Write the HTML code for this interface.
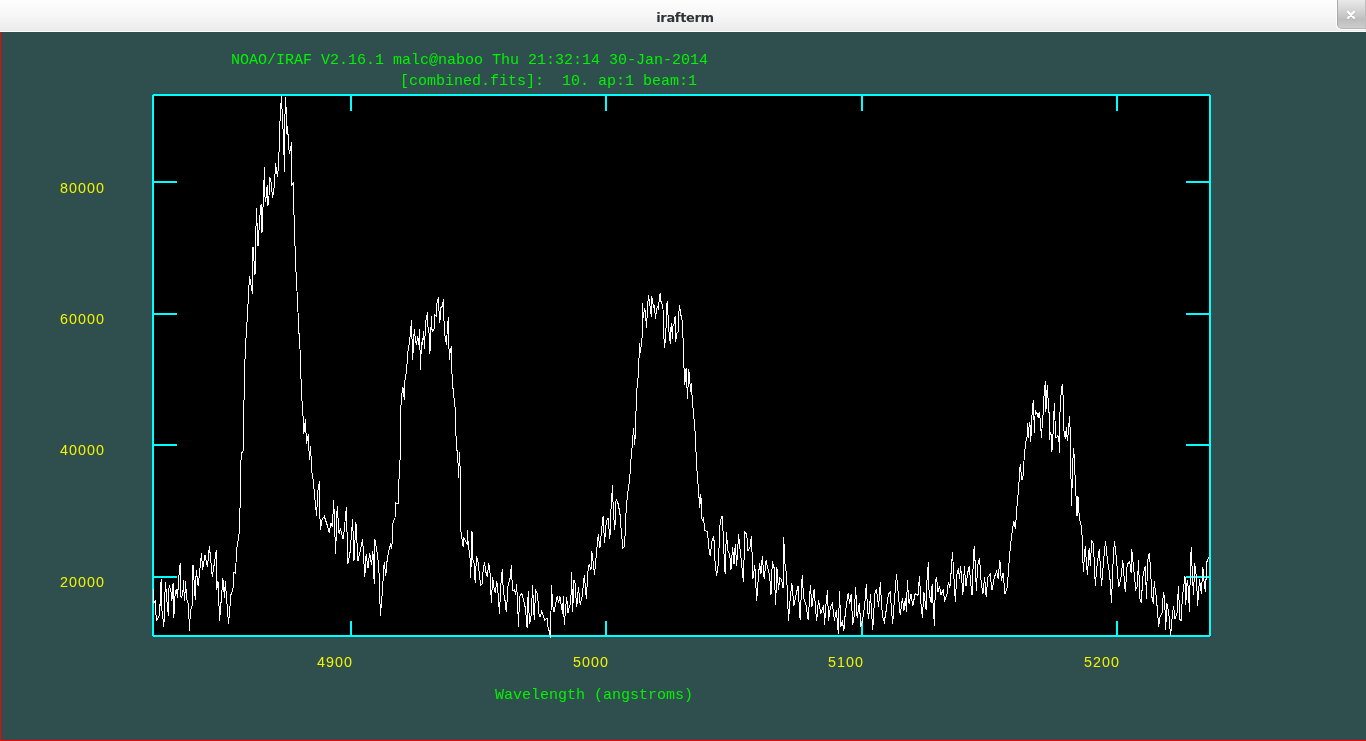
<!DOCTYPE html>
<html><head><meta charset="utf-8"><title>irafterm</title>
<style>
html,body{margin:0;padding:0;}
body{width:1366px;height:741px;overflow:hidden;background:#2f4f4f;position:relative;font-family:"Liberation Mono","DejaVu Sans Mono",monospace;}
#tb{position:absolute;left:0;top:0;width:1366px;height:31px;background:linear-gradient(#fefefe 0%,#f6f6f6 50%,#ebebeb 100%);border-bottom:1px solid #fbfbfb;}
#title{position:absolute;left:2px;top:1px;width:1366px;height:31px;line-height:33px;text-align:center;font-family:"DejaVu Sans","Liberation Sans",sans-serif;font-weight:bold;font-size:13px;letter-spacing:-0.35px;color:#2e3436;will-change:transform;}
#close{position:absolute;left:1337px;top:0;width:29px;height:29px;background:linear-gradient(#e9e9e9 0%,#cfcfcf 45%,#bdbdbd 70%,#cdcdcd 100%);border-left:1px solid #a9a9a9;border-bottom:1px solid #b5b5b5;border-bottom-left-radius:5px;box-sizing:border-box;box-shadow:-1px 1px 0 rgba(255,255,255,0.85), inset -1px 0 0 #bdbdbd;}
#close svg{position:absolute;left:8px;top:10.4px;}
#redl{position:absolute;left:0;top:32px;width:1px;height:709px;background:#ff0000;}
#redb{position:absolute;left:0;top:740px;width:1366px;height:1px;background:#ff0000;}
#plot{position:absolute;left:0;top:0;}
.t{position:absolute;font-size:15px;line-height:15px;height:15px;white-space:pre;letter-spacing:0;will-change:transform;}
.g{color:#00f400;}
.y{color:#f4f400;font-family:"Liberation Sans",sans-serif;font-size:14.3px;letter-spacing:1.047px;}
</style></head><body>
<div id="tb"></div><div id="title">irafterm</div>
<div id="close"><svg width="10" height="11" viewBox="0 0 10 11"><path d="M2 2.8 L8 8.8 M8 2.8 L2 8.8" stroke="#a8a8a8" stroke-width="2.3" stroke-linecap="round" fill="none"/><path d="M2 2 L8 8 M8 2 L2 8" stroke="#ffffff" stroke-width="2.3" stroke-linecap="round" fill="none"/></svg></div>
<div id="redl"></div><div id="redb"></div>
<svg id="plot" width="1366" height="741" viewBox="0 0 1366 741" shape-rendering="crispEdges">
<rect x="152" y="94" width="1059" height="543" fill="#00ffff"/>
<rect x="154" y="96" width="1055" height="539" fill="#000000"/>
<rect x="152" y="94" width="1" height="1" fill="#2f4f4f"/><rect x="1210" y="94" width="1" height="1" fill="#2f4f4f"/><rect x="1210" y="636" width="1" height="1" fill="#1a2c2c"/><rect x="152" y="636" width="1" height="1" fill="#2a4646"/>
<g fill="#00ffff"><rect x="350" y="96" width="2" height="15"/><rect x="350" y="621" width="2" height="15"/><rect x="605" y="96" width="2" height="15"/><rect x="605" y="621" width="2" height="15"/><rect x="861" y="96" width="2" height="15"/><rect x="861" y="621" width="2" height="15"/><rect x="1116" y="96" width="2" height="15"/><rect x="1116" y="621" width="2" height="15"/><rect x="154" y="181" width="23" height="2"/><rect x="1186" y="181" width="23" height="2"/><rect x="154" y="313" width="23" height="2"/><rect x="1186" y="313" width="23" height="2"/><rect x="154" y="444" width="23" height="2"/><rect x="1186" y="444" width="23" height="2"/><rect x="154" y="576" width="23" height="2"/><rect x="1186" y="576" width="23" height="2"/></g>
<polyline fill="none" stroke="#ffffff" stroke-width="1" stroke-linejoin="miter" points="153.6,589.4 154.0,603.0 155.2,601.2 155.7,610.6 156.4,620.6 158.0,618.2 159.0,616.3 159.5,604.5 160.4,605.0 160.6,586.5 161.3,579.3 161.8,610.6 162.8,614.4 163.4,626.7 164.2,621.0 164.7,602.1 165.3,582.3 165.9,588.0 166.5,595.5 167.5,607.8 168.4,615.8 168.9,588.9 169.4,585.1 170.3,588.9 171.3,593.6 171.9,601.2 172.7,585.1 173.3,583.2 173.6,617.7 174.4,610.6 174.8,598.4 175.5,591.3 176.5,589.8 177.4,597.9 177.7,589.8 178.4,588.9 178.6,579.0 179.5,570.0 180.2,563.0 180.4,595.5 181.4,597.0 182.3,595.5 182.9,591.7 183.6,580.0 184.0,591.7 184.5,600.7 185.2,589.8 185.7,580.9 186.4,598.8 187.3,600.7 188.3,604.0 188.9,616.3 189.5,631.0 190.2,615.4 190.8,610.2 192.1,605.4 192.5,588.9 193.0,565.3 193.7,573.8 194.6,590.8 195.4,599.8 195.8,579.5 196.4,570.0 197.3,579.5 198.2,586.1 201.5,553.0 202.6,570.0 205.0,554.8 207.5,567.0 209.4,546.0 212.3,576.7 216.4,550.0 216.7,589.6 218.0,581.5 219.6,620.7 222.9,578.3 224.5,597.7 225.3,581.5 228.5,623.6 231.0,594.5 232.9,589.6 233.9,572.6 235.5,573.4 236.6,550.0 238.3,539.4 239.8,527.8 240.4,472.9 241.3,453.6 243.4,450.6 243.7,416.5 244.6,369.0 245.8,340.8 246.6,330.0 248.0,304.0 249.5,276.5 252.5,294.0 253.0,247.0 255.0,275.0 256.4,208.4 258.0,246.0 260.4,208.7 261.2,203.9 262.0,233.0 263.2,202.3 264.5,167.4 264.8,195.8 265.8,202.3 266.4,189.3 267.4,185.2 268.0,205.5 269.0,195.8 269.6,177.1 270.9,180.4 271.8,189.3 272.6,198.2 273.9,189.3 274.7,181.2 275.5,163.3 276.6,171.5 277.4,177.1 278.6,165.8 279.4,139.0 280.3,113.0 281.5,95.6 282.3,116.3 283.1,131.0 283.9,150.4 284.4,171.5 285.2,96.9 286.3,110.6 286.8,134.2 287.5,126.0 288.1,135.8 288.8,148.8 289.6,153.6 290.7,147.9 291.7,142.3 292.0,184.4 293.3,182.8 293.6,203.9 294.3,222.0 295.0,245.7 296.0,271.7 297.5,301.0 298.8,330.0 300.0,349.4 301.0,378.6 302.1,403.0 303.3,420.7 303.8,433.6 305.4,419.0 306.5,444.0 308.3,434.5 309.4,459.7 310.8,446.0 311.3,469.0 313.0,478.6 314.8,497.5 316.7,516.4 317.5,493.4 319.4,481.3 320.2,530.4 322.1,519.0 324.3,516.4 327.0,524.5 329.1,532.6 331.0,523.0 332.4,527.0 333.7,500.0 335.6,554.0 337.2,505.6 339.1,534.0 340.5,528.5 343.2,539.3 344.5,527.0 346.4,507.0 347.8,564.4 349.9,554.0 352.6,519.0 354.0,561.0 355.9,521.8 358.0,561.0 360.7,548.8 362.6,539.3 364.8,577.0 366.1,554.0 368.0,567.7 369.6,552.8 371.5,565.0 372.9,551.5 374.2,583.8 374.8,539.3 376.9,551.5 378.8,566.3 380.4,615.7 382.3,592.0 384.2,562.3 385.8,575.7 386.9,562.3 388.3,552.8 390.4,544.7 391.8,548.8 393.1,521.8 395.0,517.7 395.8,502.9 398.0,504.2 399.3,471.8 400.2,457.0 400.6,430.0 400.8,408.5 401.7,394.8 402.9,387.5 404.5,400.4 404.6,382.6 406.6,370.5 407.7,353.5 409.8,339.7 411.5,320.0 412.6,360.0 414.3,329.0 415.2,338.0 416.3,345.4 417.9,336.0 418.5,345.0 419.6,329.0 420.4,369.7 421.5,342.0 422.4,345.0 423.6,331.0 424.4,349.0 425.6,322.9 427.4,312.4 428.0,327.0 429.7,336.7 429.9,353.5 431.5,316.0 432.1,331.8 434.4,328.6 434.5,314.4 436.6,316.4 436.8,304.3 438.4,297.2 438.6,303.5 439.6,322.5 440.6,315.6 441.0,307.5 442.6,305.9 443.4,299.2 443.8,316.4 444.7,334.3 446.5,345.4 447.5,324.1 448.5,317.2 449.2,360.0 450.3,350.0 451.5,346.2 451.6,367.2 452.8,386.7 455.2,408.5 456.0,436.0 456.8,450.0 457.6,452.0 458.6,477.8 459.4,452.0 460.3,472.4 460.8,530.5 463.1,546.7 463.9,537.8 465.5,541.0 467.1,543.5 467.5,530.0 468.3,546.7 469.9,554.8 470.7,578.3 472.0,531.3 472.5,558.9 474.1,563.7 475.2,583.2 476.5,556.4 478.0,562.1 479.3,573.4 480.6,585.6 482.0,584.0 483.3,568.6 484.6,562.4 485.8,571.8 487.4,576.7 488.7,563.4 489.8,568.6 490.6,584.8 491.4,603.4 492.6,576.7 493.9,588.0 495.2,592.9 496.8,581.5 497.9,591.3 499.5,613.6 500.8,584.8 502.3,569.1 503.3,591.3 504.9,599.4 506.3,612.3 507.1,601.0 508.1,584.8 510.1,578.3 511.4,565.3 512.0,579.9 513.0,591.3 514.6,589.6 515.7,595.3 516.5,584.5 517.3,596.1 518.5,626.9 519.5,597.7 521.1,593.7 522.2,594.5 523.8,601.0 525.4,608.3 527.1,627.7 528.2,591.3 529.2,617.2 529.8,623.6 531.1,615.5 532.7,585.3 533.5,608.3 534.4,620.4 535.5,589.6 537.6,594.5 538.9,613.9 540.0,617.2 541.6,611.5 543.3,615.5 544.9,620.4 547.0,618.0 548.1,627.7 549.4,631.7 550.5,638.4 551.5,585.3 552.7,605.8 554.1,612.3 555.4,604.2 557.3,596.1 558.6,602.6 559.9,596.1 561.1,605.0 562.7,613.9 563.2,596.1 564.3,624.5 565.6,608.3 566.7,596.9 567.9,613.1 569.2,607.4 570.8,602.6 571.6,572.1 572.6,612.3 574.0,579.9 574.8,580.3 576.7,607.3 578.4,587.0 580.2,604.6 582.1,596.5 584.3,575.0 586.4,599.2 587.8,572.3 589.1,564.2 591.0,569.6 591.8,550.7 593.7,566.9 594.5,575.0 596.4,553.4 598.3,534.5 599.9,548.0 601.8,527.7 603.2,515.6 604.5,542.6 606.4,521.0 608.0,518.3 609.9,538.5 611.3,502.0 612.6,485.3 613.2,510.0 614.8,530.4 616.1,499.4 618.0,503.4 619.9,512.9 621.5,534.5 622.9,548.0 624.2,546.6 625.3,531.8 626.1,510.2 627.5,494.0 629.6,480.5 630.6,464.0 632.1,447.3 633.5,428.4 634.8,444.6 635.7,420.3 636.7,390.7 638.4,374.5 639.1,356.0 639.4,343.2 640.7,353.1 641.4,339.4 642.2,338.0 642.4,303.3 643.3,318.1 644.3,309.1 645.4,311.0 646.4,327.6 647.1,316.2 647.6,305.8 648.5,295.2 649.5,302.1 650.4,309.6 651.4,316.7 651.6,296.2 652.6,300.2 653.5,307.7 654.5,304.9 655.4,318.6 656.4,311.5 657.3,306.8 658.5,308.7 659.4,296.9 660.3,293.1 660.8,301.1 662.0,303.5 663.2,310.6 663.6,333.2 664.6,347.9 665.3,335.1 665.7,342.7 666.5,306.3 667.4,301.1 667.9,311.5 668.4,325.7 669.5,337.5 670.5,343.6 670.7,329.5 671.5,323.3 672.4,338.9 673.1,324.3 674.3,323.8 675.0,317.2 675.5,316.2 675.6,341.7 676.6,334.2 677.5,332.3 678.5,331.3 678.8,313.4 679.5,305.4 680.6,312.9 681.6,319.1 682.5,320.5 682.8,337.5 683.7,338.9 683.8,356.0 684.0,367.7 684.8,385.3 686.1,367.7 687.5,398.8 688.8,369.0 690.7,392.0 691.5,382.6 692.3,401.5 693.7,415.0 695.0,431.0 695.8,447.0 696.7,467.0 698.6,491.3 699.7,507.5 700.8,494.0 702.1,521.0 703.5,518.3 704.8,530.4 707.5,531.8 708.9,548.0 710.2,556.0 712.1,539.9 713.8,535.8 714.8,558.8 716.5,576.3 718.3,564.2 720.2,521.0 722.4,515.6 723.7,548.0 725.1,573.6 726.4,531.8 727.8,550.7 729.7,554.7 731.0,569.6 732.6,546.6 734.0,564.2 735.3,543.9 736.7,565.5 738.6,534.5 739.9,548.0 741.8,565.5 743.4,581.7 744.8,531.8 746.7,534.5 748.0,550.7 749.9,548.0 751.5,535.8 752.9,579.0 754.8,565.5 756.7,600.6 758.3,577.6 759.6,562.8 761.0,573.6 762.3,556.0 764.2,579.0 766.1,560.0 767.7,568.2 769.6,575.0 771.0,595.0 772.3,561.5 774.2,568.2 775.6,605.0 776.9,566.9 778.5,589.8 779.9,577.6 781.8,580.3 783.1,588.4 783.7,537.2 785.0,564.2 786.6,575.0 788.5,620.8 790.4,596.5 791.8,583.0 793.9,606.0 795.8,596.5 798.0,585.7 800.1,619.5 802.2,575.3 803.7,598.3 805.9,604.2 808.2,619.8 810.4,584.9 811.9,607.2 814.1,589.4 816.6,621.3 818.5,599.7 820.8,613.1 823.7,604.9 824.5,625.0 826.0,604.2 827.5,590.1 828.5,620.5 830.4,607.2 832.3,603.5 834.4,620.5 836.4,610.1 838.3,633.9 839.5,590.8 840.8,626.5 842.3,620.5 843.8,630.9 845.3,613.1 848.2,593.1 849.7,604.2 851.2,593.8 852.7,625.0 854.2,616.1 855.6,587.1 857.1,617.5 859.4,602.7 860.8,627.2 862.3,622.0 864.5,607.2 866.3,584.2 867.5,608.6 868.6,619.0 870.5,594.5 872.7,630.2 874.9,593.8 876.4,588.6 878.6,607.2 880.4,581.9 881.6,607.2 883.1,619.0 884.3,622.0 886.1,610.9 888.3,594.5 890.2,592.3 891.3,607.2 892.7,623.5 894.2,602.7 896.5,574.5 897.9,589.4 900.2,615.3 902.4,598.3 903.9,610.9 905.4,598.3 906.5,612.4 907.3,580.5 909.1,604.2 911.0,593.8 912.8,606.4 915.0,593.8 918.0,595.3 919.5,576.0 920.9,602.7 922.4,617.5 923.9,592.3 926.1,610.1 926.9,581.2 928.4,561.9 929.1,593.8 931.3,602.7 932.1,584.2 933.6,614.6 934.6,625.7 935.3,581.9 936.5,576.7 938.0,592.3 939.5,585.6 941.0,594.5 943.2,590.1 944.7,600.5 946.9,595.3 948.4,581.9 949.9,587.9 951.1,572.3 952.5,552.3 954.0,579.0 955.4,602.0 956.6,576.0 958.5,567.8 959.5,579.0 960.6,566.4 961.7,579.0 962.9,594.5 964.4,566.4 965.9,586.4 967.7,573.0 969.2,565.6 970.6,581.9 972.1,595.3 973.3,561.2 974.2,546.5 975.4,567.1 976.4,591.0 977.6,566.0 979.5,558.0 981.3,584.0 983.0,593.7 984.6,577.5 986.2,597.0 987.8,577.5 990.1,574.2 992.0,590.4 994.3,577.5 996.6,571.0 998.2,579.0 999.8,559.6 1001.4,580.7 1003.1,572.6 1005.0,593.7 1007.3,587.2 1008.9,564.5 1010.5,545.0 1012.1,532.0 1013.8,520.7 1015.4,528.9 1017.0,506.2 1018.6,488.3 1020.2,464.0 1021.9,480.2 1023.5,473.7 1024.2,456.0 1025.3,447.3 1026.3,438.7 1027.1,436.5 1027.4,423.0 1028.2,437.6 1029.0,426.8 1029.6,423.5 1029.9,422.5 1030.7,441.9 1031.4,427.9 1032.3,409.5 1033.4,400.3 1033.9,417.0 1034.4,432.7 1035.2,410.6 1036.3,412.7 1037.5,413.8 1038.2,417.6 1039.3,411.6 1040.1,419.2 1040.9,430.0 1041.5,437.6 1042.0,428.9 1042.5,415.4 1043.3,414.3 1043.6,403.0 1044.4,389.5 1045.5,381.2 1045.8,411.6 1046.3,405.2 1046.7,393.3 1047.4,385.2 1047.9,394.4 1048.5,412.2 1049.4,412.7 1049.6,439.7 1050.1,432.2 1051.2,434.9 1051.7,451.6 1052.6,447.3 1053.3,424.6 1054.4,403.5 1055.0,420.3 1055.5,437.0 1056.6,437.6 1057.7,436.0 1058.8,438.1 1059.5,452.7 1059.8,415.4 1060.9,397.1 1061.5,386.3 1062.5,385.2 1063.1,396.5 1063.6,427.9 1064.5,434.9 1065.4,438.7 1066.3,427.3 1066.9,434.9 1067.4,441.4 1068.1,434.3 1068.8,428.9 1069.3,416.0 1070.1,427.9 1070.6,456.0 1071.5,506.2 1072.8,460.8 1073.7,447.8 1075.4,483.5 1077.0,515.9 1078.0,496.4 1079.3,517.5 1081.8,528.9 1083.3,571.6 1085.2,546.3 1087.4,575.3 1089.2,547.8 1090.4,565.6 1091.6,540.4 1093.4,544.1 1095.3,585.7 1097.1,564.9 1099.3,549.3 1101.5,586.4 1103.8,558.2 1105.5,541.1 1107.5,561.2 1109.7,574.5 1111.5,602.7 1113.0,564.1 1114.4,541.1 1116.4,558.2 1118.6,587.2 1120.8,579.0 1122.8,560.4 1125.3,592.4 1127.2,564.1 1129.7,561.9 1131.2,573.0 1131.7,549.3 1133.4,565.6 1135.7,589.4 1137.2,586.4 1138.6,560.4 1139.7,598.3 1141.2,602.7 1143.1,574.5 1145.3,565.6 1146.5,599.0 1147.6,561.2 1149.3,553.0 1150.5,568.6 1152.0,597.5 1153.5,604.2 1154.2,581.2 1156.0,595.3 1157.2,607.2 1158.7,626.5 1160.2,616.1 1162.0,613.1 1163.4,591.6 1164.6,598.3 1165.7,629.5 1166.8,603.5 1168.8,613.1 1170.6,636.2 1172.0,619.0 1173.5,605.7 1175.0,619.0 1177.2,612.4 1178.4,585.7 1179.8,619.0 1181.0,621.3 1182.4,596.8 1183.9,585.0 1185.0,576.0 1185.7,605.0 1187.2,580.5 1188.4,587.9 1189.4,612.4 1190.6,558.2 1191.3,547.5 1192.4,576.0 1193.6,595.3 1194.6,563.4 1196.5,577.5 1197.6,605.7 1199.5,579.0 1201.4,593.8 1202.8,567.1 1204.4,585.0 1205.4,591.6 1206.9,561.9 1208.9,556.7"/>
</svg>
<div class="t g" style="left:231px;top:53px">NOAO/IRAF V2.16.1 malc@naboo Thu 21:32:14 30-Jan-2014</div>
<div class="t g" style="left:400px;top:74px">[combined.fits]:  10. ap:1 beam:1</div>
<div class="t g" style="left:495px;top:688px">Wavelength (angstroms)</div>
<div class="t y" style="left:316.6px;top:655px">4900</div>
<div class="t y" style="left:572.6px;top:655px">5000</div>
<div class="t y" style="left:827.6px;top:655px">5100</div>
<div class="t y" style="left:1083.6px;top:655px">5200</div>
<div class="t y" style="left:59.6px;top:181px">80000</div>
<div class="t y" style="left:59.6px;top:312px">60000</div>
<div class="t y" style="left:59.6px;top:443px">40000</div>
<div class="t y" style="left:59.6px;top:575px">20000</div>
</body></html>
